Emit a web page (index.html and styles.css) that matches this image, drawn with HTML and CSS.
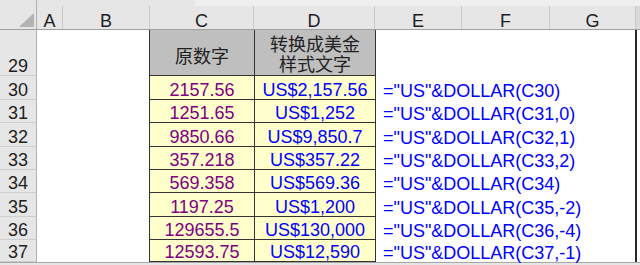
FILE: index.html
```html
<!DOCTYPE html>
<html>
<head>
<meta charset="utf-8">
<link rel="stylesheet" href="styles.css">
</head>
<body>
<div class="sheet">
  <div class="colhead">
    <div class="corner">
      <svg class="tri" width="36" height="29" viewBox="0 0 36 29"><polygon points="34,13 34,27 19,27" fill="#b3b3b3"/></svg>
    </div>
    <div class="letters">
      <div class="band"></div>
      <div class="lrow">
        <div class="lc la">A</div>
        <div class="lc lb">B</div>
        <div class="lc lcc">C</div>
        <div class="lc ld">D</div>
        <div class="lc le">E</div>
        <div class="lc lf">F</div>
        <div class="lc lg">G</div>
        <div class="lrest"></div>
      </div>
    </div>
  </div>

  <div class="row r29">
    <div class="rh">29</div>
    <div class="c a"></div><div class="c b"></div>
    <div class="c cc hd hdc">原数字</div>
    <div class="c d hd hdd">转换成美金<br>样式文字</div>
    <div class="c e"></div><div class="c f"></div><div class="c g"></div><div class="edge"></div>
  </div>

  <div class="row h24">
    <div class="rh">30</div>
    <div class="c a"></div><div class="c b"></div>
    <div class="c cc num">2157.56</div>
    <div class="c d usd">US$2,157.56</div>
    <div class="c e fx">="US"&amp;DOLLAR(C30)</div><div class="c f"></div><div class="c g"></div><div class="edge"></div>
  </div>
  <div class="row h23">
    <div class="rh">31</div>
    <div class="c a"></div><div class="c b"></div>
    <div class="c cc num">1251.65</div>
    <div class="c d usd">US$1,252</div>
    <div class="c e fx">="US"&amp;DOLLAR(C31,0)</div><div class="c f"></div><div class="c g"></div><div class="edge"></div>
  </div>
  <div class="row h24">
    <div class="rh">32</div>
    <div class="c a"></div><div class="c b"></div>
    <div class="c cc num">9850.66</div>
    <div class="c d usd">US$9,850.7</div>
    <div class="c e fx">="US"&amp;DOLLAR(C32,1)</div><div class="c f"></div><div class="c g"></div><div class="edge"></div>
  </div>
  <div class="row h23">
    <div class="rh">33</div>
    <div class="c a"></div><div class="c b"></div>
    <div class="c cc num">357.218</div>
    <div class="c d usd">US$357.22</div>
    <div class="c e fx">="US"&amp;DOLLAR(C33,2)</div><div class="c f"></div><div class="c g"></div><div class="edge"></div>
  </div>
  <div class="row h23">
    <div class="rh">34</div>
    <div class="c a"></div><div class="c b"></div>
    <div class="c cc num">569.358</div>
    <div class="c d usd">US$569.36</div>
    <div class="c e fx">="US"&amp;DOLLAR(C34)</div><div class="c f"></div><div class="c g"></div><div class="edge"></div>
  </div>
  <div class="row h24">
    <div class="rh">35</div>
    <div class="c a"></div><div class="c b"></div>
    <div class="c cc num">1197.25</div>
    <div class="c d usd">US$1,200</div>
    <div class="c e fx">="US"&amp;DOLLAR(C35,-2)</div><div class="c f"></div><div class="c g"></div><div class="edge"></div>
  </div>
  <div class="row h23">
    <div class="rh">36</div>
    <div class="c a"></div><div class="c b"></div>
    <div class="c cc num">129655.5</div>
    <div class="c d usd">US$130,000</div>
    <div class="c e fx">="US"&amp;DOLLAR(C36,-4)</div><div class="c f"></div><div class="c g"></div><div class="edge"></div>
  </div>
  <div class="row h22">
    <div class="rh">37</div>
    <div class="c a"></div><div class="c b"></div>
    <div class="c cc num">12593.75</div>
    <div class="c d usd">US$12,590</div>
    <div class="c e fx">="US"&amp;DOLLAR(C37,-1)</div><div class="c f"></div><div class="c g"></div><div class="edge"></div>
  </div>

  <div class="bottom"></div>
</div>
</body>
</html>
```

FILE: styles.css
```css
* { box-sizing: border-box; }
html, body {
  margin: 0;
  padding: 0;
}
body {
  width: 640px;
  height: 265px;
  overflow: hidden;
  background: #e6e6e6;
  font-family: "Liberation Sans", Arial, "Noto Sans CJK SC", sans-serif;
  font-size: 18px;
  color: #1e1e1e;
}
.sheet {
  display: flex;
  flex-direction: column;
  width: 640px;
}

/* column header */
.colhead {
  display: flex;
  height: 30px;
  border-bottom: 1px solid #9f9f9f;
  background: #e6e6e6;
}
.corner {
  width: 37px;
  flex: none;
  border-right: 1px solid #b0b0b0;
}
.tri { display: block; }
.letters {
  flex: 1;
  display: flex;
  flex-direction: column;
}
.band {
  height: 6px;
  margin-left: 158px;
  background: #efefef;
}
.lrow {
  flex: 1;
  display: flex;
}
.lc {
  flex: none;
  display: flex;
  align-items: flex-end;
  justify-content: center;
  line-height: 16px;
  border-right: 1px solid #c8c8c8;
}
.la { width: 26px; }
.lb { width: 87px; }
.lcc { width: 104px; }
.ld { width: 121px; }
.le { width: 87px; }
.lf { width: 88px; }
.lg { width: 86px; }
.lrest { flex: 1; background: #d9d9d9; }

/* rows */
.row { display: flex; }
.r29 { height: 46px; }
.h24 { height: 24px; }
.h23 { height: 23px; }
.h22 { height: 22px; }

.rh {
  width: 37px;
  flex: none;
  background: #e6e6e6;
  border-right: 1px solid #b0b0b0;
  border-bottom: 1px solid #cdcdcd;
  display: flex;
  align-items: flex-end;
  justify-content: center;
  line-height: 18px;
}
.c {
  flex: none;
  background: #ffffff;
  display: flex;
  align-items: flex-end;
  line-height: 18px;
  white-space: nowrap;
}
.a { width: 26px; }
.b { width: 86px; }
.cc {
  width: 105px;
  border-left: 1px solid #333333;
  border-bottom: 1px solid #333333;
  background: #ffffcc;
  justify-content: center;
}
.d {
  width: 122px;
  border-left: 1px solid #333333;
  border-right: 1px solid #333333;
  border-bottom: 1px solid #333333;
  background: #ffffcc;
  justify-content: center;
}
.e { width: 86px; overflow: visible; position: relative; z-index: 1; }
.f { width: 88px; }
.g { width: 85px; }
.edge {
  flex: 1;
  background: #ffffff;
  border-left: 2px solid #2b2b2b;
}

.hd {
  background: #bfbfbf;
  font-family: "Liberation Sans", "Noto Sans CJK SC", sans-serif;
  color: #222222;
  text-align: center;
}
.hdc {
  align-items: center;
  padding-top: 9px;
  line-height: 20px;
}
.hdd {
  line-height: 20px;
}
.num { color: #800080; }
.usd { color: #0000ff; }
.fx {
  color: #0000ff;
  padding-left: 7px;
}

.bottom {
  height: 3px;
  border-top: 1px solid #a6a6a6;
  background: #e6e6e6;
}
```
